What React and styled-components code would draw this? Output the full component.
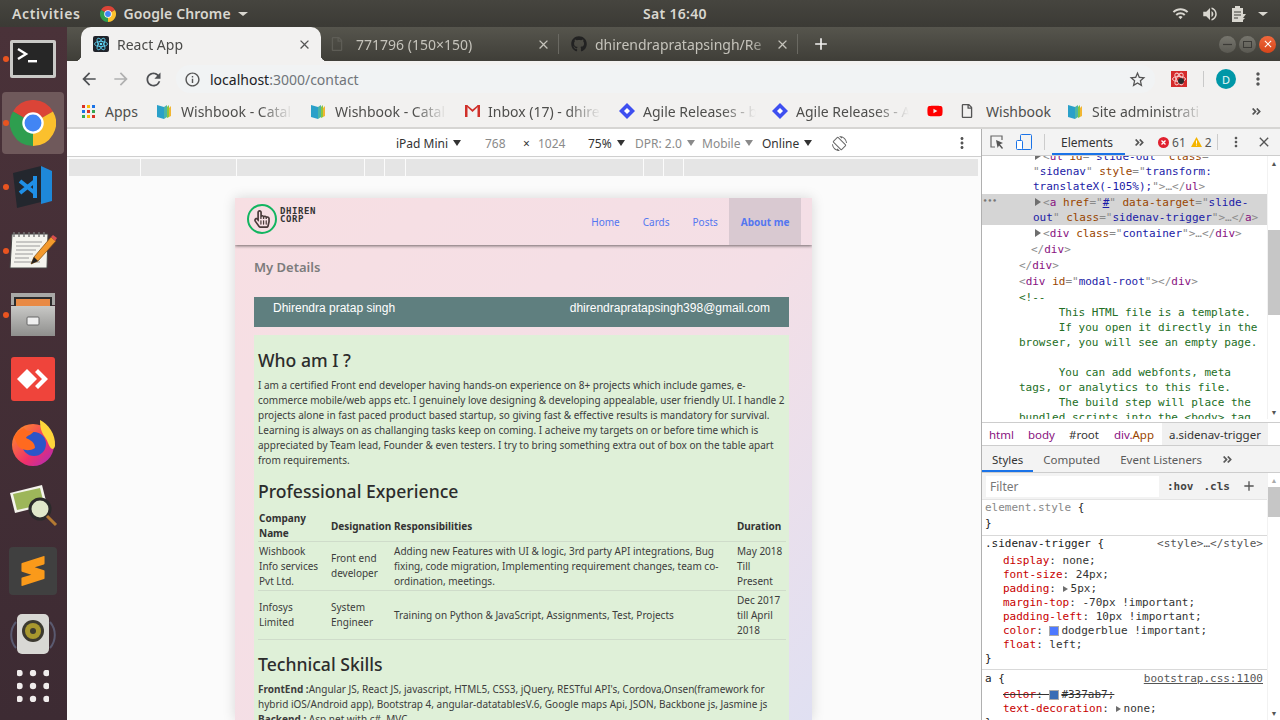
import React from "react";
import styled, { createGlobalStyle } from "styled-components";
import {
  MdArrowBack,
  MdArrowForward,
  MdRefresh,
  MdInfoOutline,
  MdStarBorder,
  MdMoreVert,
  MdClose,
  MdAdd,
  MdWifi,
  MdVolumeUp,
  MdScreenRotation,
} from "react-icons/md";
import { FaGithub, FaYoutube, FaRegHandPointer, FaRegFile, FaAngleDoubleRight } from "react-icons/fa";
import { SiSublimetext } from "react-icons/si";

const UI = `"Noto Sans", "Open Sans", sans-serif`;
const MONO = `"DejaVu Sans Mono", "Liberation Mono", monospace`;

const Global = createGlobalStyle`
  html, body { margin: 0; padding: 0; overflow: hidden; background: #3e2c33; }
  * { box-sizing: border-box; }
`;

const Screen = styled.div`
  width: 1280px;
  height: 720px;
  display: flex;
  flex-direction: column;
  overflow: hidden;
  font-family: ${UI};
`;

const Arrow = styled.span`
  display: inline-block;
  width: 0;
  height: 0;
  flex: none;
  border-left: ${(p) => p.$s || 4}px solid transparent;
  border-right: ${(p) => p.$s || 4}px solid transparent;
  border-top: ${(p) => (p.$s ? p.$s - 1 : 6)}px solid currentColor;
`;

/* ---------- ubuntu top bar ---------- */
const TopBar = styled.div`
  height: 27px;
  flex: none;
  display: grid;
  grid-template-columns: 1fr auto 1fr;
  align-items: center;
  background: linear-gradient(#46453f, #3b3a35);
  color: #d9d7d0;
  font-size: 14px;
  font-weight: 600;
`;
const TopLeft = styled.div`
  display: flex;
  align-items: center;
  padding-left: 12px;
  letter-spacing: 0.6px;
`;
const TopApp = styled.div`
  display: flex;
  align-items: center;
  gap: 7px;
  margin-left: 20px;
  letter-spacing: 0.1px;
`;
const TopRight = styled.div`
  display: flex;
  align-items: center;
  justify-content: flex-end;
  gap: 12px;
  padding-right: 12px;
`;
const Clock = styled.div`
  margin-left: 70px;
  letter-spacing: 0.3px;
`;

const Body = styled.div`
  flex: 1;
  display: flex;
  min-height: 0;
`;

/* ---------- dock ---------- */
const Dock = styled.div`
  width: 67px;
  flex: none;
  display: flex;
  flex-direction: column;
  background: linear-gradient(#4a3239, #3d2b33);
`;
const DockItem = styled.div`
  position: relative;
  height: 62px;
  flex: none;
  display: flex;
  align-items: center;
  justify-content: center;
  border-radius: 4px;
  margin: 1px 3px 1px 2px;
  padding-bottom: ${(p) => p.$lift || 0}px;
  background: ${(p) => (p.$active ? "#6f595b" : "transparent")};
`;
const RunDot = styled.span`
  position: absolute;
  left: 1px;
  top: 50%;
  width: 6px;
  height: 6px;
  margin-top: -3px;
  border-radius: 50%;
  background: #e95420;
`;

/* ---------- chrome ---------- */
const Browser = styled.div`
  flex: 1;
  min-width: 0;
  display: flex;
  flex-direction: column;
  background: #f2f1f0;
`;
const TabStrip = styled.div`
  height: 34px;
  flex: none;
  display: flex;
  align-items: flex-end;
  padding-left: 14px;
  background: linear-gradient(#56554d, #3f3e38);
`;
const ActiveTab = styled.div`
  position: relative;
  width: 240px;
  height: 34px;
  display: flex;
  align-items: center;
  padding: 0 9px 0 12px;
  background: #f2f1f0;
  border-radius: 10px 10px 0 0;
  color: #4a4a48;
  font-size: 14px;
  &::before,
  &::after {
    content: "";
    position: absolute;
    bottom: 0;
    width: 6px;
    height: 6px;
  }
  &::before {
    left: -6px;
    background: radial-gradient(circle at 0 0, transparent 6px, #f2f1f0 6.5px);
  }
  &::after {
    right: -6px;
    background: radial-gradient(circle at 100% 0, transparent 6px, #f2f1f0 6.5px);
  }
`;
const Tab = styled.div`
  position: relative;
  width: ${(p) => p.$w}px;
  height: 34px;
  display: flex;
  align-items: center;
  padding: 0 8px 0 ${(p) => p.$pl}px;
  color: #c5c3bb;
  font-size: 14px;
  &::after {
    content: "";
    position: absolute;
    right: 0;
    top: 7px;
    bottom: 7px;
    width: 1px;
    background: #6a6962;
  }
`;
const TabLabel = styled.span`
  flex: 1;
  margin-left: ${(p) => p.$ml}px;
  white-space: nowrap;
  overflow: hidden;
  mask-image: linear-gradient(to right, #000 86%, transparent);
`;
const WindowButtons = styled.div`
  margin-left: auto;
  height: 34px;
  display: flex;
  align-items: center;
  gap: 3px;
  padding-right: 4px;
`;
const WindowButton = styled.div`
  width: 17px;
  height: 17px;
  border-radius: 50%;
  display: flex;
  align-items: center;
  justify-content: center;
  color: ${(p) => (p.$close ? "#fff" : "#3c3b37")};
  background: ${(p) => (p.$close ? "linear-gradient(#f0683c, #d6451a)" : "linear-gradient(#77766e, #5a5952)")};
`;
const NewTab = styled.div`
  margin-left: 13px;
  height: 34px;
  display: flex;
  align-items: center;
  color: #f2f1f0;
`;

const Toolbar = styled.div`
  height: 36px;
  flex: none;
  display: flex;
  align-items: center;
  padding-left: 6px;
  color: #5f6368;
`;
const NavIcon = styled.div`
  width: 32px;
  flex: none;
  display: flex;
  justify-content: center;
  color: ${(p) => p.$color || "#54565a"};
`;
const Omnibox = styled.div`
  width: 979px;
  height: 28px;
  flex: none;
  margin-left: 7px;
  border-radius: 14px;
  background: #f1f3f4;
  display: flex;
  align-items: center;
  padding: 0 8px;
`;
const Url = styled.div`
  margin-left: 9px;
  font-size: 14px;
  color: #202124;
  flex: 1;
  span { color: #70757a; }
`;
const ExtBox = styled.div`
  width: 16px;
  height: 16px;
  margin-left: 16px;
  flex: none;
  display: flex;
`;
const VSep = styled.div`
  width: 1px;
  height: 16px;
  flex: none;
  background: #c9c9c9;
  margin: 0 12px 0 16px;
`;
const Avatar = styled.div`
  width: 20px;
  height: 20px;
  flex: none;
  border-radius: 50%;
  background: #0097a7;
  color: #e8f7f8;
  font-size: 11px;
  display: flex;
  align-items: center;
  justify-content: center;
  margin-right: 6px;
`;

const Bookmarks = styled.div`
  height: 32px;
  flex: none;
  display: flex;
  align-items: center;
  padding: 0 0 2px 15px;
  border-bottom: 2px solid #d6d5d3;
`;
const Bookmark = styled.div`
  width: ${(p) => p.$w}px;
  flex: none;
  display: flex;
  align-items: center;
  gap: ${(p) => p.$gap || 8}px;
  color: #4e4e4c;
  font-size: 14px;
  white-space: nowrap;
  overflow: hidden;
`;
const BookmarkText = styled.span`
  width: ${(p) => p.$w}px;
  overflow: hidden;
  mask-image: ${(p) => (p.$fade ? "linear-gradient(to right, #000 70%, transparent)" : "none")};
`;
const MoreBookmarks = styled.div`
  margin-left: auto;
  padding-right: 18px;
  display: flex;
  color: #555;
`;

const Workspace = styled.div`
  flex: 1;
  min-height: 0;
  display: flex;
`;

/* ---------- device emulation ---------- */
const Emulator = styled.div`
  width: 914px;
  flex: none;
  display: flex;
  flex-direction: column;
  background: #fbfbfb;
  overflow: hidden;
`;
const DeviceBar = styled.div`
  height: 28px;
  flex: none;
  display: flex;
  align-items: center;
  padding: 1px 0 0 329px;
  background: #fff;
  border-bottom: 1px solid #cfcfcf;
  font-size: 12px;
`;
const DeviceSlot = styled.div`
  width: ${(p) => p.$w}px;
  flex: none;
  display: flex;
  align-items: center;
  gap: 5px;
  color: ${(p) => p.$color || "#333"};
`;
const DeviceMenu = styled.div`
  margin-left: 101px;
  color: #555;
  display: flex;
`;
const Ruler = styled.div`
  height: 17px;
  flex: none;
  margin-top: 2px;
  padding-left: 2px;
  display: flex;
  gap: 1px;
`;
const RulerCell = styled.div`
  width: ${(p) => p.$w}px;
  background: #e5e5e5;
`;
const Device = styled.div`
  width: 577px;
  margin: 22px 0 0 168px;
  flex: 1;
  min-height: 0;
  background: linear-gradient(135deg, #f7dfe3 0%, #f4dfe6 55%, #e0e0f2 100%);
  box-shadow: 0 0 12px rgba(0, 0, 0, 0.15);
  overflow: hidden;
`;
const SiteNav = styled.div`
  height: 47px;
  display: flex;
  align-items: flex-start;
  justify-content: space-between;
  padding: 0 11px 0 12px;
  box-shadow: 0 1px 3px rgba(0, 0, 0, 0.55);
`;
const Logo = styled.div`
  display: flex;
  align-items: flex-start;
  gap: 3px;
  padding-top: 6px;
`;
const LogoMark = styled.div`
  width: 30px;
  height: 30px;
  border: 2px solid #12b560;
  border-radius: 50%;
  display: flex;
  align-items: center;
  justify-content: center;
  color: #4a3a3a;
`;
const LogoText = styled.div`
  font-family: ${MONO};
  font-weight: 700;
  font-size: 9px;
  line-height: 7.5px;
  letter-spacing: 0.6px;
  color: #333;
  padding-top: 4px;
`;
const SiteLinks = styled.div`
  display: flex;
  height: 47px;
`;
const SiteLink = styled.div`
  padding: 0 11.5px;
  display: flex;
  align-items: center;
  font-size: 10px;
  color: #5477f0;
  font-weight: ${(p) => (p.$active ? 700 : 400)};
  background: ${(p) => (p.$active ? "#d9c9d1" : "transparent")};
`;
const SiteBody = styled.div`
  padding: 14px 23px 0 19px;
`;
const PageTitle = styled.div`
  font-size: 13px;
  font-weight: 600;
  line-height: 17px;
  color: #7c7c7c;
`;
const Banner = styled.div`
  margin-top: 21px;
  height: 30px;
  padding: 2px 19px;
  display: flex;
  justify-content: space-between;
  background: #5f7f7f;
  color: #fff;
  font-family: "Liberation Sans", Arial, sans-serif;
  font-size: 12px;
  line-height: 18px;
`;
const Resume = styled.div`
  margin-top: 8px;
  padding: 12px 2px 0 4px;
  height: 400px;
  background: #dff0d8;
  color: #333;
`;
const Heading = styled.h3`
  margin: 0 0 5px;
  font-size: 17.6px;
  line-height: 26px;
  font-weight: 500;
  color: #2c2c2c;
`;
const Para = styled.div`
  font-size: 10px;
  line-height: 15px;
  color: #3c3c3c;
  white-space: nowrap;
  margin-bottom: ${(p) => p.$mb || 0}px;
`;
const Table = styled.table`
  width: 528px;
  table-layout: fixed;
  border-collapse: collapse;
  font-size: 10px;
  line-height: 15px;
  color: #3c3c3c;
  margin: 7px 0 11px;
  white-space: nowrap;
`;
const Th = styled.th`
  width: ${(p) => p.$w}px;
  padding: 0 1px;
  text-align: left;
  vertical-align: middle;
  color: #333;
  font-weight: 700;
  border-bottom: 1px solid #cfdcca;
`;
const Td = styled.td`
  padding: 1.5px 1px;
  vertical-align: middle;
  border-bottom: 1px solid #cfdcca;
`;

/* ---------- devtools ---------- */
const DevTools = styled.div`
  flex: 1;
  min-width: 0;
  display: flex;
  flex-direction: column;
  background: #fff;
  border-left: 1px solid #b0b0b0;
  font-size: 12px;
  color: #333;
  overflow: hidden;
`;
const DtToolbar = styled.div`
  height: 27px;
  flex: none;
  display: flex;
  align-items: center;
  background: #f3f3f3;
  border-bottom: 1px solid #cdcdcd;
`;
const DtIcon = styled.div`
  width: ${(p) => p.$w || 26}px;
  flex: none;
  display: flex;
  justify-content: center;
  color: #555;
`;
const DtSep = styled.div`
  width: 1px;
  height: 16px;
  flex: none;
  background: #ccc;
  margin: ${(p) => p.$m || "0 6px"};
`;
const DtTab = styled.div`
  height: 26px;
  padding: 0 12px 0 9px;
  margin-left: 1px;
  display: flex;
  align-items: center;
  color: #333;
  box-shadow: inset 0 -2px 0 #1a73e8;
`;
const Counter = styled.div`
  display: flex;
  align-items: center;
  gap: 3px;
  margin-left: ${(p) => p.$ml}px;
  color: #555;
`;
const ElementsPanel = styled.div`
  height: 263px;
  flex: none;
  display: flex;
  overflow: hidden;
`;
const DomTree = styled.div`
  flex: 1;
  min-width: 0;
  overflow: hidden;
  font-family: ${MONO};
  font-size: 11px;
`;
const DomRow = styled.div`
  position: relative;
  height: ${(p) => p.$h || 15}px;
  line-height: ${(p) => (p.$h || 15) + 2}px;
  padding-left: ${(p) => p.$x}px;
  margin-top: ${(p) => p.$mt || 0}px;
  white-space: pre;
  color: #8a8a8a;
  background: ${(p) => (p.$sel ? "#d5d5d5" : "transparent")};
`;
const Tag = styled.span`
  color: #881280;
`;
const Attr = styled.span`
  color: #994500;
`;
const Val = styled.span`
  color: #1a1aa6;
`;
const Link = styled.span`
  color: #1a1aa6;
  text-decoration: underline;
`;
const Comment = styled.span`
  color: #236e25;
`;
const Caret = styled.span`
  display: inline-block;
  width: 0;
  height: 0;
  flex: none;
  border-left: 6px solid #6e6e6e;
  border-top: 4px solid transparent;
  border-bottom: 4px solid transparent;
  margin-right: ${(p) => p.$mr || 2}px;
`;
const Gutter = styled.span`
  position: absolute;
  left: 1px;
  top: -1px;
  color: #777;
  font-weight: 700;
  font-size: 7px;
  letter-spacing: 0.5px;
`;
const ScrollTrack = styled.div`
  width: 13px;
  flex: none;
  display: flex;
  flex-direction: column;
  align-items: center;
  background: #fff;
  border-left: 1px solid #f2f2f2;
`;
const ScrollArrow = styled.div`
  height: 14px;
  flex: none;
  display: flex;
  align-items: center;
  color: ${(p) => p.$color || "#555"};
  font-size: 7px;
`;
const ScrollThumb = styled.div`
  width: 100%;
  height: ${(p) => p.$h}px;
  margin-top: ${(p) => p.$mt}px;
  flex: none;
  background: #c6c6c6;
`;
const ScrollFill = styled.div`
  flex: 1;
`;
const Crumbs = styled.div`
  height: 24px;
  margin-top: 3px;
  flex: none;
  display: flex;
  align-items: center;
  border-top: 1px solid #cdcdcd;
  border-bottom: 1px solid #cdcdcd;
  color: #333;
  font-size: 11.5px;
`;
const Crumb = styled.div`
  height: 22px;
  display: flex;
  align-items: center;
  padding: 0 ${(p) => p.$p || 7}px;
  color: ${(p) => p.$color || "#333"};
  background: ${(p) => (p.$sel ? "#f0f0f0" : "transparent")};
`;
const CrumbClass = styled.span`
  color: #994500;
`;
const Tabs2 = styled.div`
  height: 27px;
  flex: none;
  display: flex;
  align-items: stretch;
  background: #f3f3f3;
  border-bottom: 1px solid #cdcdcd;
  font-size: 11.5px;
`;
const Tab2 = styled.div`
  display: flex;
  align-items: center;
  padding: 0 10px;
  color: ${(p) => (p.$active ? "#333" : "#5a5a5a")};
  box-shadow: ${(p) => (p.$active ? "inset 0 -2px 0 #1a73e8" : "none")};
`;
const StylesWrap = styled.div`
  flex: 1;
  min-height: 0;
  display: flex;
`;
const StylesPane = styled.div`
  flex: 1;
  min-width: 0;
  overflow: hidden;
  background: #fff;
`;
const FilterBar = styled.div`
  height: 27px;
  display: flex;
  align-items: center;
  background: #f3f3f3;
  padding-left: 4px;
  border-bottom: 1px solid #e4e4e4;
  font-family: ${MONO};
  font-weight: 700;
  font-size: 11px;
  color: #444;
`;
const FilterInput = styled.div`
  width: 173px;
  height: 21px;
  padding-left: 4px;
  display: flex;
  align-items: center;
  background: #fff;
  color: #777;
  font-family: ${UI};
  font-weight: 400;
  font-size: 12px;
`;
const FilterBtn = styled.div`
  margin-left: ${(p) => p.$ml}px;
`;
const FilterPlus = styled.div`
  margin-left: 11px;
  display: flex;
  color: #555;
`;
const Rule = styled.div`
  padding: ${(p) => p.$p};
  border-bottom: 1px solid #d9d9d9;
  font-family: ${MONO};
  font-size: 11px;
  line-height: 14px;
  color: #222;
`;
const RuleHead = styled.div`
  display: flex;
  justify-content: space-between;
  padding: 0 4px 0 3px;
  height: ${(p) => p.$h || 17}px;
  line-height: 16px;
  color: ${(p) => p.$color || "#222"};
`;
const Brace = styled.span`
  color: #222;
`;
const Source = styled.span`
  color: #555;
  text-decoration: ${(p) => (p.$link ? "underline" : "none")};
`;
const Decl = styled.div`
  padding-left: 21px;
  white-space: pre;
  text-decoration: ${(p) => (p.$off ? "line-through" : "none")};
  color: #333;
  display: flex;
  align-items: center;
  height: 14px;
`;
const Prop = styled.span`
  color: #c80000;
`;
const Swatch = styled.span`
  width: 10px;
  height: 10px;
  margin-right: 2px;
  flex: none;
  background: ${(p) => p.$color};
  border: 1px solid #aaa;
`;
const MiniCaret = styled(Caret)`
  border-left-width: 5px;
  border-top-width: 3.5px;
  border-bottom-width: 3.5px;
  margin-right: 3px;
`;
const CloseBrace = styled.div`
  padding-left: 3px;
  line-height: ${(p) => p.$h || 14}px;
`;

/* ---------- drawings ---------- */
const ChromeLogo = ({ size }) => (
  <svg width={size} height={size} viewBox="0 0 24 24">
    <path d="M12 12L1.6 6A12 12 0 0 1 22.4 6Z" fill="#db4437" />
    <path d="M12 12L22.4 6A12 12 0 0 1 12 24Z" fill="#fbc02d" />
    <path d="M12 12L12 24A12 12 0 0 1 1.6 6Z" fill="#2e9e4f" />
    <circle cx="12" cy="12" r="5.6" fill="#fff" />
    <circle cx="12" cy="12" r="4.4" fill="#4285f4" />
  </svg>
);

const ReactFavicon = () => (
  <svg width="16" height="16" viewBox="0 0 16 16">
    <rect width="16" height="16" rx="2" fill="#20232a" />
    <g fill="none" stroke="#61dafb" strokeWidth="0.8">
      <ellipse cx="8" cy="8" rx="6.5" ry="2.6" />
      <ellipse cx="8" cy="8" rx="6.5" ry="2.6" transform="rotate(60 8 8)" />
      <ellipse cx="8" cy="8" rx="6.5" ry="2.6" transform="rotate(120 8 8)" />
    </g>
    <circle cx="8" cy="8" r="1.3" fill="#61dafb" />
  </svg>
);

const BookIcon = () => (
  <svg width="17" height="17" viewBox="0 0 17 17">
    <path d="M1 2l7 2v12l-7-2z" fill="#2aa0c9" />
    <path d="M8 4l3-2v12l-3 2z" fill="#4cb5a8" />
    <path d="M11 4l2-2v12l-2 1z" fill="#8cc63f" />
    <path d="M13 5l2-2v10l-2 1z" fill="#f2b632" />
  </svg>
);

const GmailIcon = () => (
  <svg width="15" height="12" viewBox="0 0 15 12">
    <rect width="15" height="12" fill="#f1f1f1" />
    <path d="M0 0h2.5v12H0zM12.5 0H15v12h-2.5z" fill="#d0302a" />
    <path d="M0 0h2l5.5 4.5L13 0h2L7.5 7z" fill="#d0302a" />
  </svg>
);

const AgileIcon = () => (
  <svg width="16" height="16" viewBox="0 0 16 16">
    <path d="M8 0l8 8-8 8-8-8z" fill="#3e4ff0" />
    <path d="M8 5l3 3-3 3-3-3z" fill="#fff" />
  </svg>
);

const AppsIcon = () => {
  const colors = ["#d93025", "#fbbc04", "#1a73e8", "#1a73e8", "#d93025", "#34a853", "#34a853", "#fbbc04", "#d93025"];
  return (
    <svg width="13" height="13" viewBox="0 0 13 13">
      {colors.map((c, i) => (
        <rect key={i} x={(i % 3) * 5} y={Math.floor(i / 3) * 5} width="3" height="3" fill={c} />
      ))}
    </svg>
  );
};

const ExtIcon = () => (
  <svg width="16" height="16" viewBox="0 0 16 16">
    <rect width="16" height="16" fill="#d52b2b" />
    <g fill="none" stroke="#f6c9c9" strokeWidth="1">
      <ellipse cx="8" cy="8" rx="6.5" ry="2.6" />
      <ellipse cx="8" cy="8" rx="6.5" ry="2.6" transform="rotate(60 8 8)" />
      <ellipse cx="8" cy="8" rx="6.5" ry="2.6" transform="rotate(120 8 8)" />
    </g>
    <circle cx="10" cy="10" r="3" fill="#2b2b2b" />
  </svg>
);

const TerminalIcon = () => (
  <svg width="46" height="40" viewBox="0 0 46 40">
    <rect y="1" width="46" height="38" rx="2" fill="#c9c9c6" />
    <rect x="3" y="4" width="40" height="32" fill="#262626" />
    <path d="M8 10l8 5-8 5" fill="none" stroke="#fff" strokeWidth="2.4" />
    <rect x="18" y="21" width="9" height="2.4" fill="#fff" />
  </svg>
);

const VsCodeIcon = () => (
  <svg width="44" height="44" viewBox="0 0 44 44">
    <path d="M2 8L30 1v36L6 43z" fill="#23272e" />
    <path d="M30 1l11 5v30l-11 3z" fill="#1e88d8" />
    <path d="M9 16l15 12M9 28l15-12M24 11v22" fill="none" stroke="#1f8fe6" strokeWidth="4" />
  </svg>
);

const NotepadIcon = () => (
  <svg width="48" height="40" viewBox="0 0 48 40">
    <path d="M3 3h36l-1 34H1z" fill="#f4f4ee" stroke="#444" strokeWidth="1" />
    <path d="M5 1v5M10 1v5M15 1v5M20 1v5M25 1v5M30 1v5M35 1v5" stroke="#777" strokeWidth="1.4" />
    <path d="M7 11h26M7 15h24M7 19h20M6 23h18M6 27h14M5 31h26" stroke="#9a9a9a" strokeWidth="1" />
    <path d="M22 33l3-7L42 6l5 4-18 20z" fill="#f39a2d" stroke="#7a4a10" strokeWidth="0.7" />
    <path d="M42 6l2-2 4 3-2 3z" fill="#d84f4f" />
    <path d="M22 33l3-7 4 4z" fill="#222" />
  </svg>
);

const FilesIcon = () => (
  <svg width="46" height="44" viewBox="0 0 46 44">
    <defs>
      <linearGradient id="cabinet" x1="0" y1="0" x2="0" y2="1">
        <stop offset="0" stopColor="#c8c8c6" />
        <stop offset="1" stopColor="#8f8f8d" />
      </linearGradient>
    </defs>
    <rect x="1" y="0" width="44" height="12" fill="#a8a8a6" />
    <rect x="4" y="4" width="38" height="9" fill="#2b2b2b" />
    <rect x="6" y="6" width="34" height="7" fill="#e98a45" />
    <rect x="1" y="13" width="44" height="30" fill="url(#cabinet)" />
    <rect x="17" y="24" width="12" height="8" rx="1" fill="#efefef" stroke="#666" />
  </svg>
);

const AnyDeskIcon = () => (
  <svg width="44" height="44" viewBox="0 0 44 44">
    <rect width="44" height="44" rx="3" fill="#ef443b" />
    <path d="M16 12l10 10-10 10L6 22z" fill="#fff" />
    <path d="M27 12l10 10-10 10-3-3 7-7-7-7z" fill="#fff" />
  </svg>
);

const FirefoxIcon = () => (
  <svg width="48" height="46" viewBox="0 0 48 46">
    <defs>
      <linearGradient id="ff" x1="0" y1="0" x2="1" y2="1">
        <stop offset="0" stopColor="#ff9a1f" />
        <stop offset="0.6" stopColor="#f0306a" />
        <stop offset="1" stopColor="#a52bc4" />
      </linearGradient>
    </defs>
    <circle cx="24" cy="25" r="21" fill="url(#ff)" />
    <circle cx="25" cy="24" r="12" fill="#2c55c8" />
    <path d="M31 0c8 4 16 14 15 26-2 6-5 2-7-3-2-7-8-8-8-23z" fill="#fdd53b" />
    <path d="M5 17c3-5 6-8 10-9 2 4 7 3 10 3-2 4-7 4-8 7 4 2 9 4 9 10-6 4-14 2-17-2z" fill="#ff6a1f" />
  </svg>
);

const ViewerIcon = () => (
  <svg width="50" height="44" viewBox="0 0 50 44">
    <path d="M2 8L34 0l5 20-32 8z" fill="#f4f3ec" />
    <path d="M5 9L32 3l4 16-27 6z" fill="#9db65a" />
    <circle cx="32" cy="24" r="10" fill="#dfe8c9" stroke="#2b2b2b" strokeWidth="3" />
    <path d="M39 31l9 9" stroke="#b47a32" strokeWidth="3" />
  </svg>
);

const SublimeIcon = () => (
  <svg width="48" height="48" viewBox="0 0 48 48">
    <rect width="48" height="48" rx="4" fill="#404040" />
    <g transform="translate(9 9)" color="#fa9a1a">
      <SiSublimetext size={30} />
    </g>
  </svg>
);

const SpeakerIcon = () => (
  <svg width="54" height="42" viewBox="0 0 54 42">
    <path d="M10 8a20 20 0 0 0 0 26M44 8a20 20 0 0 1 0 26" fill="none" stroke="#5a5a70" strokeWidth="2" />
    <rect x="11" y="0" width="32" height="40" rx="5" fill="#d8d8d4" />
    <circle cx="27" cy="17" r="11" fill="#3c3a30" />
    <circle cx="27" cy="17" r="8" fill="#a8982e" />
    <circle cx="27" cy="17" r="3" fill="#3c3a30" />
  </svg>
);

const DotsIcon = () => (
  <svg width="32" height="32" viewBox="0 0 32 32">
    {[0, 1, 2, 3, 4, 5, 6, 7, 8].map((i) => (
      <circle key={i} cx={2.5 + (i % 3) * 13.5} cy={3 + Math.floor(i / 3) * 13} r="3.2" fill="#f0ecec" />
    ))}
  </svg>
);

const BatteryIcon = () => (
  <svg width="15" height="16" viewBox="0 0 15 16">
    <path d="M1 2h3V0h5v2h3v14H1z" fill="#d9d7d0" />
    <path d="M3 6h7M3 9h7M3 12h4" stroke="#3f3e39" strokeWidth="1.2" />
    <path d="M11 8h4l-3 4h2l-4 4 1-3H9z" fill="#d9d7d0" />
  </svg>
);

const InspectIcon = () => (
  <svg width="14" height="14" viewBox="0 0 14 14">
    <path d="M12 5V1H1v11h4" fill="none" stroke="#666" strokeWidth="1.2" />
    <path d="M6 5l7 3-3 1.2L13 13l-1 1-3-3.5L7.6 13z" fill="#555" />
  </svg>
);

const ResponsiveIcon = () => (
  <svg width="16" height="16" viewBox="0 0 16 16">
    <rect x="4.5" y="0.5" width="11" height="15" rx="1" fill="none" stroke="#1a73e8" />
    <rect x="0.5" y="6.5" width="6" height="9" rx="1" fill="#fff" stroke="#1a73e8" />
  </svg>
);

const ErrorDot = () => (
  <svg width="11" height="11" viewBox="0 0 11 11">
    <circle cx="5.5" cy="5.5" r="5.5" fill="#e0212f" />
    <path d="M3.5 3.5l4 4M7.5 3.5l-4 4" stroke="#fff" strokeWidth="1.3" />
  </svg>
);

const WarnIcon = () => (
  <svg width="11" height="10" viewBox="0 0 11 10">
    <path d="M5.5 0L11 10H0z" fill="#f4b400" />
    <path d="M5.5 3.5v3.2M5.5 7.6v1" stroke="#fff" strokeWidth="1" />
  </svg>
);

/* ---------- data ---------- */
const dockItems = [
  { icon: <TerminalIcon />, running: true },
  { icon: <ChromeLogo size={46} />, running: true, active: true },
  { icon: <VsCodeIcon />, running: true },
  { icon: <NotepadIcon />, running: true },
  { icon: <FilesIcon />, running: true },
  { icon: <AnyDeskIcon /> },
  { icon: <FirefoxIcon /> },
  { icon: <ViewerIcon /> },
  { icon: <SublimeIcon /> },
  { icon: <SpeakerIcon /> },
  { icon: <DotsIcon />, lift: 26 },
];

const bookmarks = [
  { w: 74, icon: <AppsIcon />, label: "Apps", gap: 10 },
  { w: 154, icon: <BookIcon />, label: "Wishbook - Catal", tw: 112, fade: true },
  { w: 155, icon: <BookIcon />, label: "Wishbook - Catal", tw: 112, fade: true },
  { w: 154, icon: <GmailIcon />, label: "Inbox (17) - dhire", tw: 113, fade: true },
  { w: 153, icon: <AgileIcon />, label: "Agile Releases - b", tw: 113, fade: true },
  { w: 155, icon: <AgileIcon />, label: "Agile Releases - A", tw: 113, fade: true },
  { w: 33, icon: <FaYoutube size={16} color="#f00" /> },
  { w: 107, icon: <FaRegFile size={14} color="#555" />, label: "Wishbook", gap: 12 },
  { w: 170, icon: <BookIcon />, label: "Site administrati", tw: 112, fade: true },
];

const about = [
  "I am a certified Front end developer having hands-on experience on 8+ projects which include games, e-",
  "commerce mobile/web apps etc. I genuinely love designing & developing appealable, user friendly UI. I handle 2",
  "projects alone in fast paced product based startup, so giving fast & effective results is mandatory for survival.",
  "Learning is always on as challanging tasks keep on coming. I acheive my targets on or before time which is",
  "appreciated by Team lead, Founder & even testers. I try to bring something extra out of box on the table apart",
  "from requirements.",
];

const jobs = [
  {
    company: ["Wishbook", "Info services", "Pvt Ltd."],
    role: ["Front end", "developer"],
    work: [
      "Adding new Features with UI & logic, 3rd party API integrations, Bug",
      "fixing, code migration, Implementing requirement changes, team co-",
      "ordination, meetings.",
    ],
    time: ["May 2018", "Till", "Present"],
  },
  {
    company: ["Infosys", "Limited"],
    role: ["System", "Engineer"],
    work: ["Training on Python & JavaScript, Assignments, Test, Projects"],
    time: ["Dec 2017", "till April", "2018"],
  },
];

const Lines = ({ items }) =>
  items.map((t, i) => (
    <React.Fragment key={i}>
      {t}
      {i < items.length - 1 && <br />}
    </React.Fragment>
  ));

export default function App() {
  return (
    <Screen>
      <Global />
      <TopBar>
        <TopLeft>
          Activities
          <TopApp>
            <ChromeLogo size={16} />
            Google Chrome
            <Arrow $s={5} />
          </TopApp>
        </TopLeft>
        <Clock>Sat 16:40</Clock>
        <TopRight>
          <MdWifi size={17} />
          <MdVolumeUp size={18} />
          <BatteryIcon />
          <Arrow $s={5} />
        </TopRight>
      </TopBar>
      <Body>
        <Dock>
          {dockItems.map((d, i) => (
            <DockItem key={i} $active={d.active} $lift={d.lift}>
              {d.running && <RunDot />}
              {d.icon}
            </DockItem>
          ))}
        </Dock>
        <Browser>
          <TabStrip>
            <ActiveTab>
              <ReactFavicon />
              <TabLabel $ml={8}>React App</TabLabel>
              <MdClose size={15} color="#555" />
            </ActiveTab>
            <Tab $w={238} $pl={9}>
              <FaRegFile size={14} color="#5e5d56" />
              <TabLabel $ml={12}>771796 (150×150)</TabLabel>
              <MdClose size={15} />
            </Tab>
            <Tab $w={239} $pl={12}>
              <FaGithub size={16} color="#222" />
              <TabLabel $ml={8}>dhirendrapratapsingh/Re</TabLabel>
              <MdClose size={15} />
            </Tab>
            <NewTab>
              <MdAdd size={20} />
            </NewTab>
            <WindowButtons>
              <WindowButton>
                <svg width="9" height="9" viewBox="0 0 9 9">
                  <path d="M0 4.5h9" stroke="#3c3b37" strokeWidth="1.2" />
                </svg>
              </WindowButton>
              <WindowButton>
                <svg width="9" height="9" viewBox="0 0 9 9">
                  <rect x="0.5" y="1.5" width="8" height="6" fill="none" stroke="#3c3b37" />
                </svg>
              </WindowButton>
              <WindowButton $close>
                <MdClose size={12} />
              </WindowButton>
            </WindowButtons>
          </TabStrip>
          <Toolbar>
            <NavIcon $color="#4f5154">
              <MdArrowBack size={20} />
            </NavIcon>
            <NavIcon $color="#b0b0b0">
              <MdArrowForward size={20} />
            </NavIcon>
            <NavIcon $color="#4f5154">
              <MdRefresh size={21} />
            </NavIcon>
            <Omnibox>
              <MdInfoOutline size={17} color="#555" />
              <Url>
                localhost<span>:3000/contact</span>
              </Url>
              <MdStarBorder size={19} color="#555" />
            </Omnibox>
            <ExtBox>
              <ExtIcon />
            </ExtBox>
            <VSep />
            <Avatar>D</Avatar>
            <NavIcon $color="#555">
              <MdMoreVert size={20} />
            </NavIcon>
          </Toolbar>
          <Bookmarks>
            {bookmarks.map((b, i) => (
              <Bookmark key={i} $w={b.w} $gap={b.gap}>
                {b.icon}
                {b.label && (
                  <BookmarkText $w={b.tw} $fade={b.fade}>
                    {b.label}
                  </BookmarkText>
                )}
              </Bookmark>
            ))}
            <MoreBookmarks>
              <FaAngleDoubleRight size={11} />
            </MoreBookmarks>
          </Bookmarks>
          <Workspace>
            <Emulator>
              <DeviceBar>
                <DeviceSlot $w={89}>
                  iPad Mini <Arrow />
                </DeviceSlot>
                <DeviceSlot $w={38} $color="#8a8a8a">768</DeviceSlot>
                <DeviceSlot $w={15}>×</DeviceSlot>
                <DeviceSlot $w={50} $color="#8a8a8a">1024</DeviceSlot>
                <DeviceSlot $w={47}>
                  75% <Arrow />
                </DeviceSlot>
                <DeviceSlot $w={67} $color="#8a8a8a">
                  DPR: 2.0 <Arrow />
                </DeviceSlot>
                <DeviceSlot $w={60} $color="#8a8a8a">
                  Mobile <Arrow />
                </DeviceSlot>
                <DeviceSlot $w={70}>
                  Online <Arrow />
                </DeviceSlot>
                <DeviceSlot $w={20} $color="#666">
                  <MdScreenRotation size={15} />
                </DeviceSlot>
                <DeviceMenu>
                  <MdMoreVert size={18} />
                </DeviceMenu>
              </DeviceBar>
              <Ruler>
                {[71, 95, 127, 19, 20, 237, 19, 19, 294].map((w, i) => (
                  <RulerCell key={i} $w={w} />
                ))}
              </Ruler>
              <Device>
                <SiteNav>
                  <Logo>
                    <LogoMark>
                      <FaRegHandPointer size={18} />
                    </LogoMark>
                    <LogoText>
                      DHIREN
                      <br />
                      CORP
                    </LogoText>
                  </Logo>
                  <SiteLinks>
                    <SiteLink>Home</SiteLink>
                    <SiteLink>Cards</SiteLink>
                    <SiteLink>Posts</SiteLink>
                    <SiteLink $active>About me</SiteLink>
                  </SiteLinks>
                </SiteNav>
                <SiteBody>
                  <PageTitle>My Details</PageTitle>
                  <Banner>
                    <span>Dhirendra pratap singh</span>
                    <span>dhirendrapratapsingh398@gmail.com</span>
                  </Banner>
                  <Resume>
                    <Heading>Who am I ?</Heading>
                    <Para $mb={10}>
                      <Lines items={about} />
                    </Para>
                    <Heading>Professional Experience</Heading>
                    <Table>
                      <thead>
                        <tr>
                          <Th $w={72}>
                            Company
                            <br />
                            Name
                          </Th>
                          <Th $w={63}>Designation</Th>
                          <Th $w={343}>Responsibilities</Th>
                          <Th $w={50}>Duration</Th>
                        </tr>
                      </thead>
                      <tbody>
                        {jobs.map((j, i) => (
                          <tr key={i}>
                            <Td>
                              <Lines items={j.company} />
                            </Td>
                            <Td>
                              <Lines items={j.role} />
                            </Td>
                            <Td>
                              <Lines items={j.work} />
                            </Td>
                            <Td>
                              <Lines items={j.time} />
                            </Td>
                          </tr>
                        ))}
                      </tbody>
                    </Table>
                    <Heading>Technical Skills</Heading>
                    <Para>
                      <b>FrontEnd :</b>Angular JS, React JS, javascript, HTML5, CSS3, jQuery, RESTful API's, Cordova,Onsen(framework for
                      <br />
                      hybrid iOS/Android app), Bootstrap 4, angular-datatablesV.6, Google maps Api, JSON, Backbone js, Jasmine js
                      <br />
                      <b>Backend :</b> Asp.net with c#, MVC
                    </Para>
                  </Resume>
                </SiteBody>
              </Device>
            </Emulator>
            <DevTools>
              <DtToolbar>
                <DtIcon $w={30}>
                  <InspectIcon />
                </DtIcon>
                <DtIcon $w={24}>
                  <ResponsiveIcon />
                </DtIcon>
                <DtSep $m="0 6px 0 8px" />
                <DtTab>Elements</DtTab>
                <DtIcon $w={29}>
                  <FaAngleDoubleRight size={11} />
                </DtIcon>
                <Counter $ml={4}>
                  <ErrorDot /> 61
                </Counter>
                <Counter $ml={5}>
                  <WarnIcon /> 2
                </Counter>
                <DtSep $m="0 0 0 5px" />
                <DtIcon $w={36}>
                  <MdMoreVert size={16} />
                </DtIcon>
                <DtIcon $w={20}>
                  <MdClose size={16} />
                </DtIcon>
              </DtToolbar>
              <ElementsPanel>
                <DomTree>
                  <DomRow $x={53} $mt={-7} $h={14}>
                    <Caret $mr={2} />
                    {"<"}
                    <Tag>ul</Tag> <Attr>id</Attr>="<Val>slide-out</Val>" <Attr>class</Attr>="
                  </DomRow>
                  <DomRow $x={51}>
                    "<Val>sidenav</Val>" <Attr>style</Attr>="<Val>transform:</Val>
                  </DomRow>
                  <DomRow $x={51} $h={16}>
                    <Val>translateX(-105%);</Val>"{">…</"}
                    <Tag>ul</Tag>
                    {">"}
                  </DomRow>
                  <DomRow $x={53} $sel $h={15}>
                    <Gutter>•••</Gutter>
                    <Caret $mr={2} />
                    {"<"}
                    <Tag>a</Tag> <Attr>href</Attr>="<Link>#</Link>" <Attr>data-target</Attr>="<Val>slide-</Val>
                  </DomRow>
                  <DomRow $x={51} $sel $h={16}>
                    <Val>out</Val>" <Attr>class</Attr>="<Val>sidenav-trigger</Val>"{">…</"}
                    <Tag>a</Tag>
                    {">"}
                  </DomRow>
                  <DomRow $x={53} $h={16}>
                    <Caret $mr={2} />
                    {"<"}
                    <Tag>div</Tag> <Attr>class</Attr>="<Val>container</Val>"{">…</"}
                    <Tag>div</Tag>
                    {">"}
                  </DomRow>
                  <DomRow $x={49} $h={16}>
                    {"</"}
                    <Tag>div</Tag>
                    {">"}
                  </DomRow>
                  <DomRow $x={37} $h={16}>
                    {"</"}
                    <Tag>div</Tag>
                    {">"}
                  </DomRow>
                  <DomRow $x={37} $h={16}>
                    {"<"}
                    <Tag>div</Tag> <Attr>id</Attr>="<Val>modal-root</Val>"{"></"}
                    <Tag>div</Tag>
                    {">"}
                  </DomRow>
                  <DomRow $x={37} $h={15}>
                    <Comment>{"<!--"}</Comment>
                  </DomRow>
                  <DomRow $x={37}>
                    <Comment>{"      This HTML file is a template."}</Comment>
                  </DomRow>
                  <DomRow $x={37}>
                    <Comment>{"      If you open it directly in the"}</Comment>
                  </DomRow>
                  <DomRow $x={37}>
                    <Comment>browser, you will see an empty page.</Comment>
                  </DomRow>
                  <DomRow $x={37} />
                  <DomRow $x={37}>
                    <Comment>{"      You can add webfonts, meta"}</Comment>
                  </DomRow>
                  <DomRow $x={37}>
                    <Comment>tags, or analytics to this file.</Comment>
                  </DomRow>
                  <DomRow $x={37}>
                    <Comment>{"      The build step will place the"}</Comment>
                  </DomRow>
                  <DomRow $x={37}>
                    <Comment>{"bundled scripts into the <body> tag."}</Comment>
                  </DomRow>
                </DomTree>
                <ScrollTrack>
                  <ScrollArrow>▲</ScrollArrow>
                  <ScrollThumb $mt={60} $h={85} />
                  <ScrollFill />
                  <ScrollArrow>▼</ScrollArrow>
                </ScrollTrack>
              </ElementsPanel>
              <Crumbs>
                <Crumb $color="#881280">html</Crumb>
                <Crumb $color="#881280">body</Crumb>
                <Crumb>#root</Crumb>
                <Crumb $color="#881280" $p={8}>
                  div.<CrumbClass>App</CrumbClass>
                </Crumb>
                <Crumb $sel>a.sidenav-trigger</Crumb>
              </Crumbs>
              <Tabs2>
                <Tab2 $active>Styles</Tab2>
                <Tab2>Computed</Tab2>
                <Tab2>Event Listeners</Tab2>
                <Tab2>
                  <FaAngleDoubleRight size={11} />
                </Tab2>
              </Tabs2>
              <StylesWrap>
                <StylesPane>
                  <FilterBar>
                    <FilterInput>Filter</FilterInput>
                    <FilterBtn $ml={8}>:hov</FilterBtn>
                    <FilterBtn $ml={10}>.cls</FilterBtn>
                    <FilterPlus>
                      <MdAdd size={16} />
                    </FilterPlus>
                  </FilterBar>
                  <Rule $p="0 0 3px">
                    <RuleHead $color="#888" $h={16}>
                      <span>
                        element.style <Brace>{"{"}</Brace>
                      </span>
                    </RuleHead>
                    <CloseBrace $h={16}>{"}"}</CloseBrace>
                  </Rule>
                  <Rule $p="0 0 3px">
                    <RuleHead $h={18}>
                      <span>{".sidenav-trigger {"}</span>
                      <Source>{"<style>…</style>"}</Source>
                    </RuleHead>
                    <Decl>
                      <Prop>display</Prop>: none;
                    </Decl>
                    <Decl>
                      <Prop>font-size</Prop>: 24px;
                    </Decl>
                    <Decl>
                      <Prop>padding</Prop>: <MiniCaret />5px;
                    </Decl>
                    <Decl>
                      <Prop>margin-top</Prop>: -70px !important;
                    </Decl>
                    <Decl>
                      <Prop>padding-left</Prop>: 10px !important;
                    </Decl>
                    <Decl>
                      <Prop>color</Prop>: <Swatch $color="#4d79ff" />dodgerblue !important;
                    </Decl>
                    <Decl>
                      <Prop>float</Prop>: left;
                    </Decl>
                    <CloseBrace>{"}"}</CloseBrace>
                  </Rule>
                  <Rule $p="1px 0 4px">
                    <RuleHead>
                      <span>{"a {"}</span>
                      <Source $link>bootstrap.css:1100</Source>
                    </RuleHead>
                    <Decl $off>
                      <Prop>color</Prop>: <Swatch $color="#3a6db5" />#337ab7;
                    </Decl>
                    <Decl>
                      <Prop>text-decoration</Prop>: <MiniCaret />none;
                    </Decl>
                    <CloseBrace>{"}"}</CloseBrace>
                  </Rule>
                </StylesPane>
                <ScrollTrack>
                  <ScrollArrow $color="#aaa">▲</ScrollArrow>
                  <ScrollThumb $mt={0} $h={30} />
                  <ScrollFill />
                  <ScrollArrow>▼</ScrollArrow>
                </ScrollTrack>
              </StylesWrap>
            </DevTools>
          </Workspace>
        </Browser>
      </Body>
    </Screen>
  );
}
